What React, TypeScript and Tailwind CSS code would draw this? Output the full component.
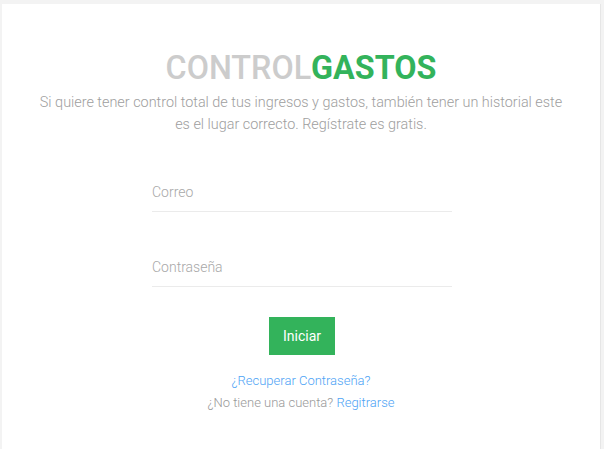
export default function App() {
  return (
    <div className="min-h-screen bg-[#f3f3f3] pt-[4px] pl-[2px] pr-[2px] font-['Roboto',sans-serif]">
      <div className="bg-white w-[599px] h-[445px] border-r border-[#e6e6e6] flex flex-col items-center">
        {/* Header */}
        <h1 className="mt-[44px] text-[32.3px] leading-[40px] font-bold">
          <span className="text-[#cccccc] font-medium">CONTROL</span>
          <span className="text-[#33b35b]">GASTOS</span>
        </h1>
        <p className="mt-[4px] w-[530px] text-center text-[14.4px] leading-[22px] font-light text-[#9e9e9e]">
          Si quiere tener control total de tus ingresos y gastos, también tener un historial este es el lugar correcto. Regístrate es gratis.
        </p>

        {/* Form */}
        <form className="mt-[37px] w-[300px] flex flex-col items-center translate-x-[1px]">
          <input
            type="email"
            placeholder="Correo"
            className="w-full h-[39px] border-b border-[#ebebeb] text-[14px] font-light text-gray-700 placeholder:text-[#a8a8a8] outline-none"
          />
          <input
            type="password"
            placeholder="Contraseña"
            className="mt-[36px] w-full h-[39px] border-b border-[#ebebeb] text-[14px] font-light text-gray-700 placeholder:text-[#a8a8a8] outline-none"
          />
          <button type="button" className="mt-[30px] w-[66px] h-[38px] bg-[#33b35b] text-white text-[14px]">
            Iniciar
          </button>
        </form>

        <div className="mt-[15px] flex flex-col items-center text-[13px] leading-[22px] font-light">
          <a className="text-[#4da3f5]">¿Recuperar Contraseña?</a>
          <p className="text-[#999999]">
            ¿No tiene una cuenta? <a className="text-[#4da3f5]">Regitrarse</a>
          </p>
        </div>
      </div>
    </div>
  );
}
